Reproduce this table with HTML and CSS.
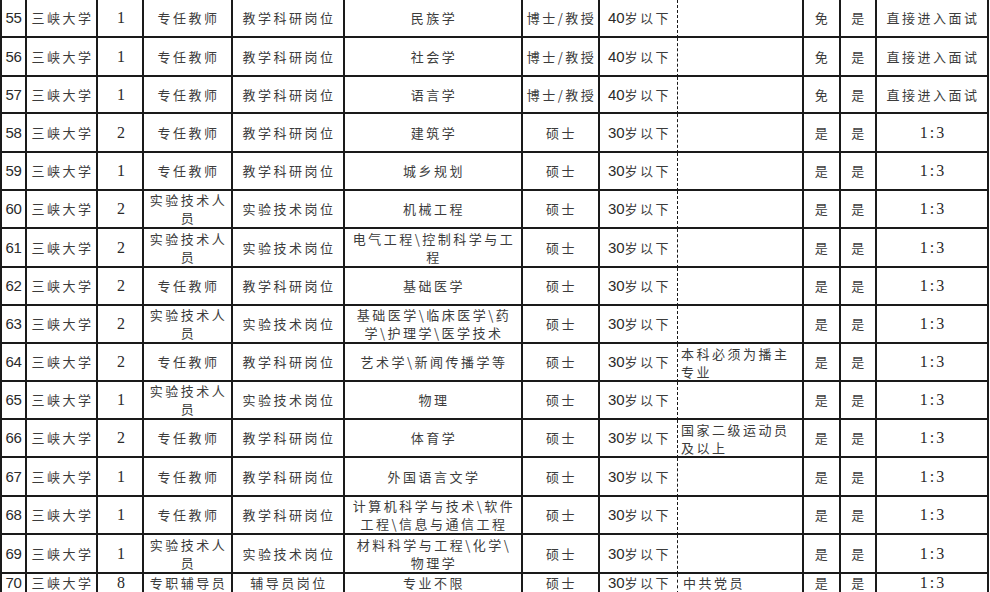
FILE: index.html
```html
<!DOCTYPE html>
<html lang="zh-CN">
<head>
<meta charset="utf-8">
<title>三峡大学招聘岗位表</title>
<link rel="stylesheet" href="styles.css">
</head>
<body>
<table class="jobs">
<tbody>
<tr class="r38">
<td class="c1 no">55</td><td class="c2">三峡大学</td><td class="c3 cnt">1</td><td class="c4">专任教师</td><td class="c5">教学科研岗位</td><td class="c6">民族学</td><td class="c7">博士/教授</td><td class="c8 age"><span class="d">40</span>岁以下</td><td class="c9 rem"></td><td class="c10">免</td><td class="c11">是</td><td class="c12">直接进入面试</td>
</tr>
<tr class="r39">
<td class="no">56</td><td>三峡大学</td><td class="cnt">1</td><td>专任教师</td><td>教学科研岗位</td><td>社会学</td><td>博士/教授</td><td class="age"><span class="d">40</span>岁以下</td><td class="rem"></td><td>免</td><td>是</td><td>直接进入面试</td>
</tr>
<tr class="r37">
<td class="no">57</td><td>三峡大学</td><td class="cnt">1</td><td>专任教师</td><td>教学科研岗位</td><td>语言学</td><td>博士/教授</td><td class="age"><span class="d">40</span>岁以下</td><td class="rem"></td><td>免</td><td>是</td><td>直接进入面试</td>
</tr>
<tr class="r39">
<td class="no">58</td><td>三峡大学</td><td class="cnt">2</td><td>专任教师</td><td>教学科研岗位</td><td>建筑学</td><td>硕士</td><td class="age"><span class="d">30</span>岁以下</td><td class="rem"></td><td>是</td><td>是</td><td class="ratio">1:3</td>
</tr>
<tr class="r38">
<td class="no">59</td><td>三峡大学</td><td class="cnt">1</td><td>专任教师</td><td>教学科研岗位</td><td>城乡规划</td><td>硕士</td><td class="age"><span class="d">30</span>岁以下</td><td class="rem"></td><td>是</td><td>是</td><td class="ratio">1:3</td>
</tr>
<tr class="r38">
<td class="no">60</td><td>三峡大学</td><td class="cnt">2</td><td class="two">实验技术人<br>员</td><td>实验技术岗位</td><td>机械工程</td><td>硕士</td><td class="age"><span class="d">30</span>岁以下</td><td class="rem"></td><td>是</td><td>是</td><td class="ratio">1:3</td>
</tr>
<tr class="r39">
<td class="no">61</td><td>三峡大学</td><td class="cnt">2</td><td class="two">实验技术人<br>员</td><td>实验技术岗位</td><td class="two">电气工程\控制科学与工<br>程</td><td>硕士</td><td class="age"><span class="d">30</span>岁以下</td><td class="rem"></td><td>是</td><td>是</td><td class="ratio">1:3</td>
</tr>
<tr class="r38">
<td class="no">62</td><td>三峡大学</td><td class="cnt">2</td><td>专任教师</td><td>教学科研岗位</td><td>基础医学</td><td>硕士</td><td class="age"><span class="d">30</span>岁以下</td><td class="rem"></td><td>是</td><td>是</td><td class="ratio">1:3</td>
</tr>
<tr class="r38">
<td class="no">63</td><td>三峡大学</td><td class="cnt">2</td><td class="two">实验技术人<br>员</td><td>实验技术岗位</td><td class="two">基础医学\临床医学\药<br>学\护理学\医学技术</td><td>硕士</td><td class="age"><span class="d">30</span>岁以下</td><td class="rem"></td><td>是</td><td>是</td><td class="ratio">1:3</td>
</tr>
<tr class="r38">
<td class="no">64</td><td>三峡大学</td><td class="cnt">2</td><td>专任教师</td><td>教学科研岗位</td><td>艺术学\新闻传播学等</td><td>硕士</td><td class="age"><span class="d">30</span>岁以下</td><td class="rem"><div class="note">本科必须为播主<br>专业</div></td><td>是</td><td>是</td><td class="ratio">1:3</td>
</tr>
<tr class="r38">
<td class="no">65</td><td>三峡大学</td><td class="cnt">1</td><td class="two">实验技术人<br>员</td><td>实验技术岗位</td><td>物理</td><td>硕士</td><td class="age"><span class="d">30</span>岁以下</td><td class="rem"></td><td>是</td><td>是</td><td class="ratio">1:3</td>
</tr>
<tr class="r38">
<td class="no">66</td><td>三峡大学</td><td class="cnt">2</td><td>专任教师</td><td>教学科研岗位</td><td>体育学</td><td>硕士</td><td class="age"><span class="d">30</span>岁以下</td><td class="rem"><div class="note">国家二级运动员<br>及以上</div></td><td>是</td><td>是</td><td class="ratio">1:3</td>
</tr>
<tr class="r39">
<td class="no">67</td><td>三峡大学</td><td class="cnt">1</td><td>专任教师</td><td>教学科研岗位</td><td>外国语言文学</td><td>硕士</td><td class="age"><span class="d">30</span>岁以下</td><td class="rem"></td><td>是</td><td>是</td><td class="ratio">1:3</td>
</tr>
<tr class="r37">
<td class="no">68</td><td>三峡大学</td><td class="cnt">1</td><td>专任教师</td><td>教学科研岗位</td><td class="two">计算机科学与技术\软件<br>工程\信息与通信工程</td><td>硕士</td><td class="age"><span class="d">30</span>岁以下</td><td class="rem"></td><td>是</td><td>是</td><td class="ratio">1:3</td>
</tr>
<tr class="r39">
<td class="no">69</td><td>三峡大学</td><td class="cnt">1</td><td class="two">实验技术人<br>员</td><td>实验技术岗位</td><td class="two">材料科学与工程\化学\<br>物理学</td><td>硕士</td><td class="age"><span class="d">30</span>岁以下</td><td class="rem"></td><td>是</td><td>是</td><td class="ratio">1:3</td>
</tr>
<tr class="r19">
<td class="no">70</td><td>三峡大学</td><td class="cnt">8</td><td>专职辅导员</td><td>辅导员岗位</td><td>专业不限</td><td>硕士</td><td class="age"><span class="d">30</span>岁以下</td><td class="rem rem-inline">中共党员</td><td>是</td><td>是</td><td class="ratio">1:3</td>
</tr>
</tbody>
</table>
</body>
</html>
```

FILE: styles.css
```css
html, body {
  margin: 0;
  padding: 0;
  background: #ffffff;
  overflow: hidden;
}

.jobs {
  border-collapse: separate;
  border-spacing: 0;
  table-layout: fixed;
  width: 989px;
}

.jobs td {
  box-sizing: border-box;
  border-right: 2px solid #1a1a1a;
  border-bottom: 2px solid #1a1a1a;
  padding: 0 0 0 2px;
  text-align: center;
  vertical-align: middle;
  white-space: nowrap;
  overflow: hidden;
  font-family: "Noto Sans CJK SC", sans-serif;
  font-size: 13px;
  line-height: 18px;
  letter-spacing: 2.5px;
  color: #3c3c3c;
}

.jobs td:first-child {
  border-left: 2px solid #1a1a1a;
}

.c1 { width: 27px; }
.c2 { width: 71px; }
.c3 { width: 46px; }
.c4 { width: 89px; }
.c5 { width: 112px; }
.c6 { width: 178px; }
.c7 { width: 77px; }
.c8 { width: 78px; }
.c9 { width: 126px; }
.c10 { width: 37px; }
.c11 { width: 36px; }
.c12 { width: 112px; }

.r37 { height: 37px; }
.r38 { height: 38px; }
.r39 { height: 39px; }
.r19 { height: 19px; }

.r19 td {
  vertical-align: top;
  line-height: 18px;
}

.jobs td.no {
  font-family: "Liberation Sans", sans-serif;
  font-size: 15px;
  letter-spacing: -0.3px;
  padding-left: 0;
  color: #2a2a2a;
}

.jobs td.cnt {
  font-family: "Liberation Serif", serif;
  font-size: 16px;
  letter-spacing: 0;
  color: #2a2a2a;
}

.jobs td.age {
  border-right: 1px dashed #1a1a1a;
}

.d {
  font-family: "Liberation Sans", sans-serif;
  font-size: 15px;
  letter-spacing: 0;
  color: #2a2a2a;
}

.jobs td.ratio {
  font-family: "Liberation Serif", serif;
  font-size: 16px;
  letter-spacing: 2px;
  color: #2a2a2a;
}

.jobs td.rem {
  text-align: left;
  vertical-align: top;
  padding-left: 3px;
}

.jobs td.rem-inline {
  padding-left: 5px;
}

.note {
  box-sizing: border-box;
  height: 36px;
  padding-top: 1px;
  line-height: 18px;
  overflow: hidden;
}

.two {
  line-height: 18px;
}
```
